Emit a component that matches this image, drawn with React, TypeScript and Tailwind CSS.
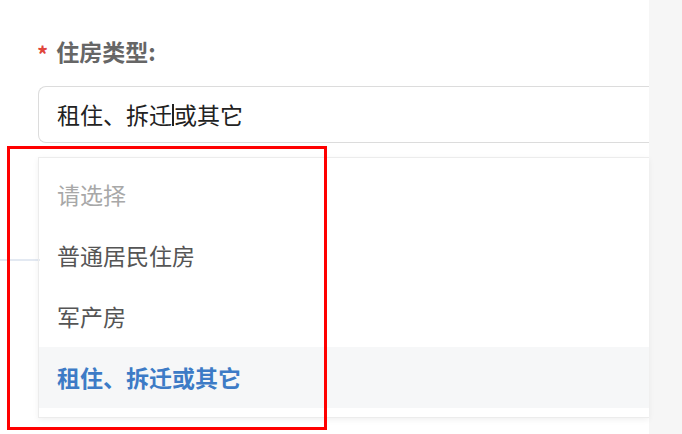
const options = ["请选择", "普通居民住房", "军产房", "租住、拆迁或其它"];

export default function App() {
  const selected = 3;

  return (
    <div
      className="flex h-[434px] w-[682px] overflow-hidden bg-[#f6f6f6]"
      style={{ fontFamily: '"Noto Sans CJK SC", "Noto Sans", sans-serif' }}
    >
      <div className="relative w-[649px] bg-white">
        {/* faint line behind the dropdown */}
        <div className="absolute left-0 top-[259px] h-[2px] w-[40px] bg-[#e3e9f2]" />

        <div className="flex items-center pl-[37px] pt-[36px]">
          <span className="mr-[8px] mt-[4px] text-[22px] font-bold leading-none text-[#e0453a]">*</span>
          <span className="text-[23px] font-bold leading-[30px] text-[#666]">住房类型:</span>
        </div>

        <div className="ml-[38px] mt-[20px] flex h-[57px] items-center rounded-l-[8px] border border-r-0 border-[#dcdcdc] pl-[18px]">
          <span className="text-[23px] text-[#222]">租住、拆迁</span>
          <span className="h-[22px] w-[2px] bg-[#222]" />
          <span className="text-[23px] text-[#222]">或其它</span>
        </div>

        <div className="relative ml-[38px] mt-[14px] h-[261px] border-y border-l border-[#ececec] pb-[10px] pt-[6px] shadow-[0_2px_6px_rgba(0,0,0,0.06)]">
          {options.map((o, i) => (
            <div
              key={o}
              className={`flex h-[61px] items-center pl-[18px] text-[23px] ${
                i === 0
                  ? "text-[#a8a8a8]"
                  : i === selected
                  ? "bg-[#f6f7f8] font-bold text-[#3d7bc6]"
                  : "text-[#555]"
              }`}
            >
              {o}
            </div>
          ))}
        </div>

        {/* red highlight box */}
        <div className="absolute left-[7px] top-[146px] h-[284px] w-[320px] border-[3px] border-[#ff0000]" />
      </div>
    </div>
  );
}
